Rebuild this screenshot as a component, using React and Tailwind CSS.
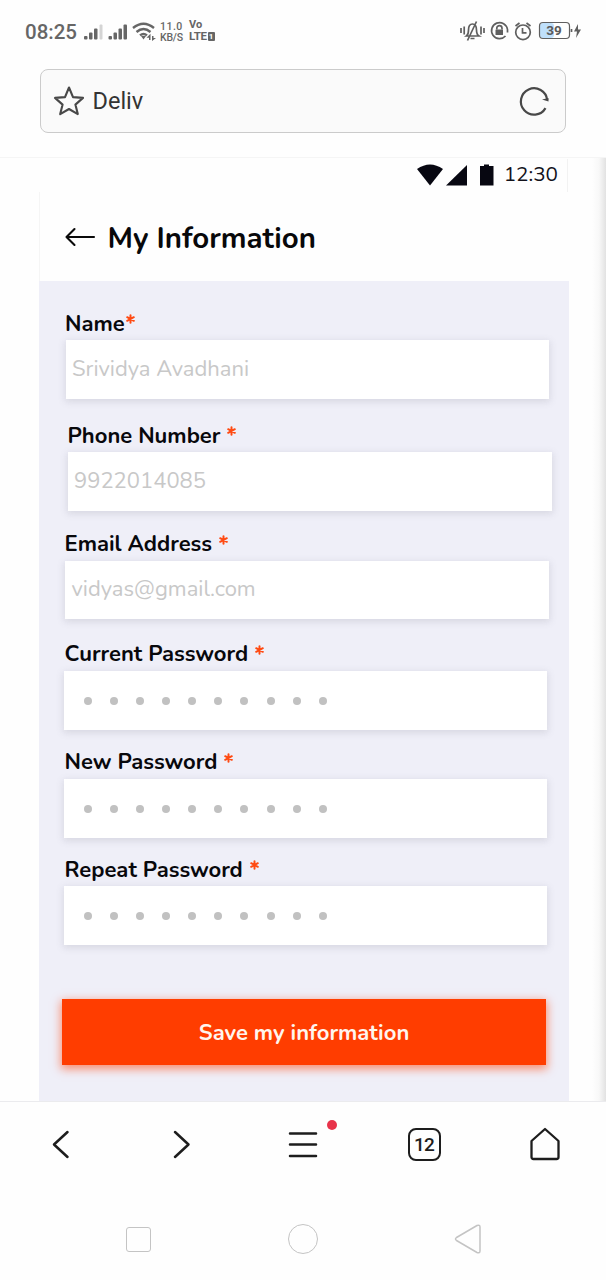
import React from "react";

const fields = [
  { label: "Name", gap: "ml-px", value: "Srividya Avadhani", box: "ml-[26.5px] w-[483.5px] h-[59px]", wrap: "pt-[25px]", indent: "pl-[26px]", leading: "leading-[36px]" },
  { label: "Phone Number", gap: "ml-[7px]", value: "9922014085", box: "ml-[28.5px] w-[484px] h-[59px]", wrap: "pt-[19px]", indent: "pl-[28.5px]", leading: "leading-[36px]" },
  { label: "Email Address", gap: "ml-[7px]", value: "vidyas@gmail.com", box: "ml-[26px] w-[484px] h-[58px]", wrap: "pt-[16px]", indent: "pl-[25.5px]", leading: "leading-[35px]" },
  { label: "Current Password", gap: "ml-[7px]", box: "ml-[25px] w-[483px] h-[59px]", wrap: "pt-[18px]", indent: "pl-[25.5px]", leading: "leading-[35px]" },
  { label: "New Password", gap: "ml-[7px]", box: "ml-[25px] w-[483px] h-[59px]", wrap: "pt-[15px]", indent: "pl-[25.5px]", leading: "leading-[35px]" },
  { label: "Repeat Password", gap: "ml-[7px]", box: "ml-[25px] w-[483px] h-[59px]", wrap: "pt-[13.5px]", indent: "pl-[25.5px]", leading: "leading-[36px]" },
];

function Asterisk() {
  return (
    <svg className="h-[10px] w-[9px]" viewBox="0 0 9 10" stroke="#ff4a12" strokeWidth="2" strokeLinecap="round">
      <path d="M4.500 1.200v7.600M1.200 3.200l6.600 3.600M7.800 3.200l-6.600 3.600" />
    </svg>
  );
}

function Field({ label, gap, value, box, wrap, indent, leading }) {
  return (
    <div className={wrap}>
      <label className={`flex h-[34px] ${indent}`}>
        <span className={`whitespace-nowrap text-[22px] font-bold text-[#08080c] ${leading}`}>{label}</span>
        <span className={`pt-[8px] ${gap}`}><Asterisk /></span>
      </label>
      <div className={`flex items-center bg-white shadow-[0_2px_7px_1px_rgba(90,90,110,0.15)] ${box}`}>
        {value ? (
          <span className="whitespace-nowrap pb-[2px] pl-[6.500px] text-[22px] font-normal leading-none text-[#c8c8c8]">{value}</span>
        ) : (
          <div className="flex gap-[18.150px] pl-[19.600px] pt-[1px]">
            {Array.from({ length: 10 }, (_, i) => (
              <span key={i} className="h-[8px] w-[8px] rounded-full bg-[#c1c1c1]" />
            ))}
          </div>
        )}
      </div>
    </div>
  );
}

function StatusBar() {
  return (
    <div className="flex h-[69px] items-start justify-between pl-[25px] pr-[24px] font-['Roboto',sans-serif] text-[#666]">
      <div className="flex h-[63px] items-center">
        <span className="w-[59px] whitespace-nowrap pt-px text-[20.500px] font-medium leading-none">08:25</span>
        <svg className="h-[24px] w-[72px]" viewBox="84 19.500 72 24" fill="#666">
          <rect x="84" y="35.500" width="3.500" height="3.500" rx="1" />
          <rect x="89" y="32" width="3.500" height="7" rx="1" />
          <rect x="94" y="28" width="3.500" height="11" rx="1" />
          <rect x="99.500" y="24" width="3" height="15" rx="1" fill="#d4d4d4" />
          <rect x="108.500" y="35.500" width="3.500" height="3.500" rx="1" />
          <rect x="113.500" y="32" width="3.500" height="7" rx="1" />
          <rect x="118.500" y="28" width="3.500" height="11" rx="1" />
          <rect x="123.500" y="24" width="3.500" height="15" rx="1" />
          <g fill="none" stroke="#666" strokeWidth="2.400">
            <path d="M133 27.500q10.500-8.500 21 0" />
            <path d="M136.500 31.500q7-6 14 0" />
            <path d="M140 34.900q3.500-3 7 0" />
          </g>
          <path d="M141 35.500h5l-2.500 3.500z" />
          <path d="M146.500 37.200l4-4V39.500h-1.500v-2.300zM156 37.500h-2.500v-2H152v5z" />
        </svg>
        <div className="ml-[4px] w-[29px] text-[10.500px] font-medium leading-[11px]">
          <div className="whitespace-nowrap tracking-[0.500px]">11.0</div>
          <div className="whitespace-nowrap tracking-[-0.200px]">KB/S</div>
        </div>
        <div className="font-bold">
          <div className="h-[10px] text-[11px] leading-[8px]">Vo</div>
          <div className="flex h-[11px] items-center text-[11.500px] leading-[11px]">
            <span className="tracking-[-0.300px]">LTE</span>
            <span className="ml-px flex h-[9px] w-[7px] items-center justify-center rounded-[1px] bg-[#666] text-[8px] leading-none text-white">1</span>
          </div>
        </div>
      </div>
      <svg className="mt-[20px] h-[22px] w-[124px]" viewBox="458 20 124 22" fill="none" stroke="#5f5f5f" strokeWidth="1.700">
        <path d="M461 28v5M464.200 26.500v8M481 26.500v8M484 28v5" />
        <path d="M466.500 36q2-1.500 2-6 0-6 4-6 4 0 4 6 0 4.500 2.500 6zM470.500 38.500h4M467.500 40.500l9-19" />
        <path d="M505.500 36A8 8 0 1 1 507.500 29.500v3" />
        <path d="M496.800 29.500v-1.300a2.600 2.600 0 0 1 5.200 0v1.300" />
        <rect x="495.500" y="29.500" width="7.500" height="5.500" rx=".5" fill="#5f5f5f" stroke="none" />
        <circle cx="523" cy="32.300" r="7.300" />
        <path d="M522.500 28v4.800h4M515.500 26l4-3M530.500 26l-4-3" />
        <rect x="540" y="23" width="14" height="15" rx="3" fill="#bfe0fb" stroke="none" />
        <rect x="539.500" y="22.500" width="30" height="16" rx="3.500" strokeWidth="1.200" />
        <path d="M571.500 29v3" />
        <text x="554" y="35.300" textAnchor="middle" fontSize="13.500" fontWeight="700" fontFamily="Roboto" fill="#5a5a5a" stroke="none">39</text>
        <path d="M578 24l-4 7.500h3l-1 6.500 5-8.500h-3z" fill="#5f5f5f" stroke="none" />
      </svg>
    </div>
  );
}

function AddressBar() {
  return (
    <div className="mx-[40px] flex h-[64px] items-center justify-between rounded-[8px] border-[1.500px] border-[#cbcbcb] bg-[#fafafa] pl-[12px] pr-[15px]">
      <div className="flex items-center">
        <svg className="h-[32px] w-[32px]" viewBox="0 0 32 32" fill="none" stroke="#484848" strokeWidth="2.100" strokeLinejoin="round">
          <path d="M16 2.500l4 9.600 10 .8-7.600 6.700 2.400 9.500L16 24l-8.800 5.100 2.400-9.500L2 12.900l10-.8z" />
        </svg>
        <span className="ml-[7.500px] pt-px font-['Roboto',sans-serif] text-[23.500px] leading-none text-[#333]">Deliv</span>
      </div>
      <svg className="h-[32px] w-[32px]" viewBox="0 1 32 32" fill="none" stroke="#484848" strokeWidth="2.200">
        <path d="M27.500 24.100A13.200 13.200 0 1 1 29.200 16" />
        <path d="M24 15.500l6.500-1.500v3.500z" fill="#484848" stroke="none" />
      </svg>
    </div>
  );
}

export default function App() {
  return (
    <div className="flex h-[1280px] w-[606px] flex-col overflow-hidden bg-[#fefefe]">
      <StatusBar />
      <AddressBar />
      <div className="mt-[24px] flex h-[945px] border-y-[1.500px] border-t-[#f5f5f5] border-b-[#ebebee] font-['Nunito','Open_Sans',sans-serif]">
        <div className="ml-[39px] flex w-[530px] flex-col">
          <div className="mr-px mt-[1px] flex h-[33px] items-center justify-end border-r border-[#f2f2f2] pr-[9px]">
            <svg className="h-[24px] w-[80px]" viewBox="416 163.500 80 24" fill="#070711">
              <path d="M417 168.500q13-9 26 0L430 185z" />
              <path d="M467 164.500V185h-21z" />
              <path d="M480 165.500h4V164h5v1.500h4.500V185H480z" />
            </svg>
            <span className="ml-[8px] whitespace-nowrap pb-[2px] text-[20.700px] leading-none text-[#12121a]">12:30</span>
          </div>
          <div className="flex h-[89px] items-center border-l border-[#f5f5f5] pl-[24.500px]">
            <svg className="h-[22px] w-[32px]" viewBox="0 0 32 22" fill="none" stroke="#0a0a0a" strokeWidth="2.100" strokeLinecap="round" strokeLinejoin="round">
              <path d="M29 11H1.500M9.500 3L1.500 11l8 8" />
            </svg>
            <h1 className="ml-[11px] whitespace-nowrap pt-[4px] text-[29.400px] font-bold leading-none text-[#08080a]">My Information</h1>
          </div>
          <form className="flex flex-1 flex-col bg-[#efeff8]">
            {fields.map((f) => <Field key={f.label} {...f} />)}
            <button type="button" className="ml-[23px] mt-[54.500px] h-[66px] w-[484px] bg-[#ff3d00] pt-[2px] shadow-[0_3px_9px_1px_rgba(255,61,0,0.55)]">
              <span className="whitespace-nowrap text-[22px] font-bold text-[#fff5ee]">Save my information</span>
            </button>
          </form>
        </div>
        <div className="ml-auto w-[14px] bg-linear-to-r from-[#fefefe] via-[#f8f8f8] to-[#e2e2e2]" />
      </div>
      <div className="flex h-[84px] items-center">
        <div className="flex w-[121px] justify-center">
          <svg className="h-[32px] w-[32px]" viewBox="0 0 32 32" fill="none" stroke="#1d1d1d" strokeWidth="2.500" strokeLinecap="round" strokeLinejoin="round"><path d="M22.500 4L9 16.500 22.500 29" /></svg>
        </div>
        <div className="flex w-[121px] justify-center">
          <svg className="h-[32px] w-[32px]" viewBox="0 0 32 32" fill="none" stroke="#1d1d1d" strokeWidth="2.500" strokeLinecap="round" strokeLinejoin="round"><path d="M9 4L22.500 16.500 9 29" /></svg>
        </div>
        <div className="relative flex w-[122px] justify-center">
          <svg className="h-[32px] w-[32px]" viewBox="0 0 32 32" stroke="#1d1d1d" strokeWidth="2.500" strokeLinecap="round"><path d="M3 5.500h26M3 16.500h26M3 28h26" /></svg>
          <span className="absolute left-[85px] top-[-8px] h-[10px] w-[10px] rounded-full bg-[#e8334a]" />
        </div>
        <div className="flex w-[120px] justify-center">
          <span className="flex h-[33px] w-[33px] items-center justify-center rounded-[8px] border-[2.500px] border-[#1d1d1d] font-['Roboto',sans-serif] text-[19px] font-medium leading-none tracking-[-0.800px] text-[#1d1d1d]">12</span>
        </div>
        <div className="flex w-[122px] justify-center">
          <svg className="h-[34px] w-[32px]" viewBox="0 0 32 34" fill="none" stroke="#1d1d1d" strokeWidth="2.300" strokeLinejoin="round"><path d="M16 2L29.500 14V30q0 2-2 2h-23q-2 0-2-2V14z" /></svg>
        </div>
      </div>
      <div className="flex flex-1 items-center pt-[12px]">
        <div className="flex w-[276px] justify-center"><span className="h-[25px] w-[25px] rounded-[3px] border-[1.500px] border-[#c4c4c4]" /></div>
        <div className="flex w-[54px] justify-center"><span className="h-[30px] w-[30px] rounded-full border-[1.500px] border-[#c4c4c4]" /></div>
        <div className="flex w-[276px] justify-center">
          <svg className="h-[30px] w-[28px]" viewBox="0 0 28 30" fill="none" stroke="#c4c4c4" strokeWidth="1.500" strokeLinejoin="round"><path d="M2.500 13.500L23 1.500q3-1 3 1.500v24q0 2.500-3 1.500L2.500 16.500q-2-1.500 0-3z" /></svg>
        </div>
      </div>
    </div>
  );
}
